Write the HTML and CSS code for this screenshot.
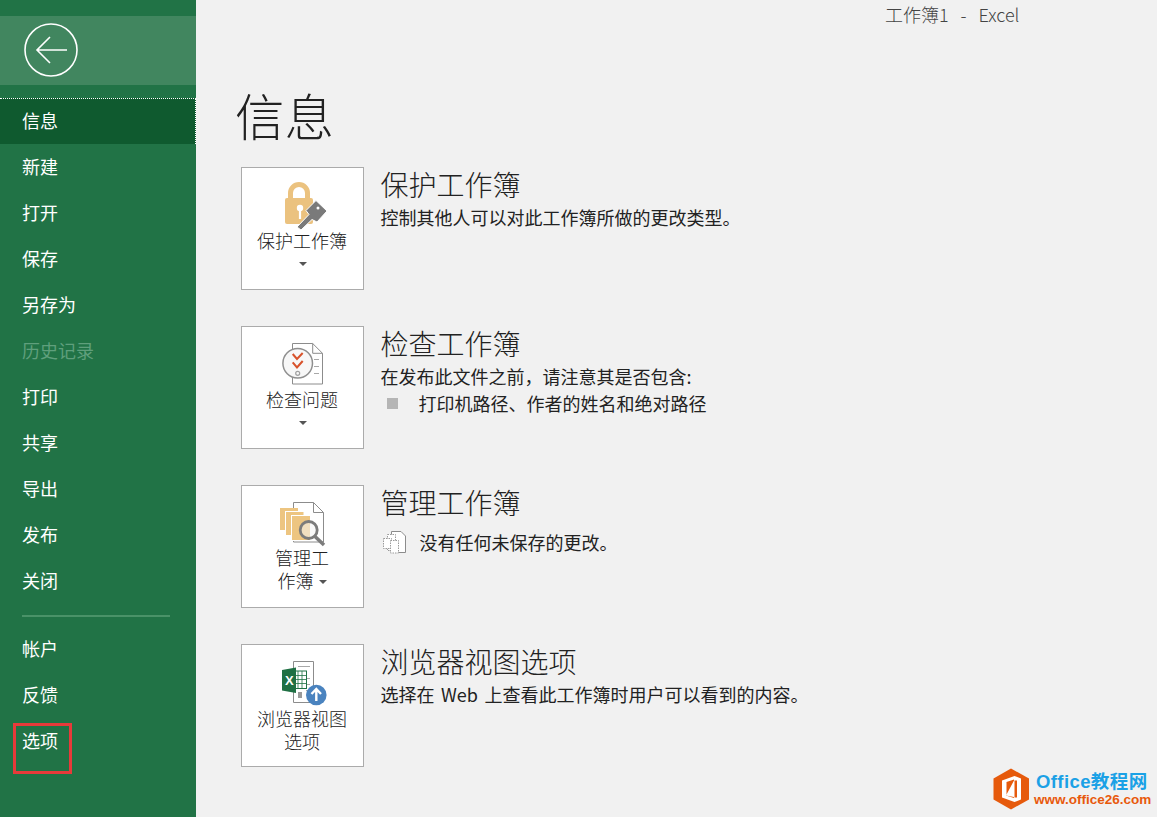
FILE: index.html
```html
<!DOCTYPE html>
<html lang="zh-CN">
<head>
<meta charset="utf-8">
<title>信息</title>
<link rel="stylesheet" href="styles.css">
</head>
<body>
<div class="app">
  <aside class="sidebar">
    <div class="back">
      <svg class="back-icon" width="56" height="56" viewBox="0 0 56 56">
        <circle cx="28" cy="28" r="26" fill="none" stroke="#fff" stroke-width="1.6"/>
        <path d="M44 28H14M27 15L14 28L27 41" fill="none" stroke="#fff" stroke-width="1.6"/>
      </svg>
    </div>
    <nav class="nav">
      <div class="nav-item active">信息</div>
      <div class="nav-item">新建</div>
      <div class="nav-item">打开</div>
      <div class="nav-item">保存</div>
      <div class="nav-item">另存为</div>
      <div class="nav-item disabled">历史记录</div>
      <div class="nav-item">打印</div>
      <div class="nav-item">共享</div>
      <div class="nav-item">导出</div>
      <div class="nav-item">发布</div>
      <div class="nav-item">关闭</div>
      <div class="nav-divider"></div>
      <div class="nav-item">帐户</div>
      <div class="nav-item">反馈</div>
      <div class="nav-item">选项</div>
    </nav>
    <div class="highlight"></div>
  </aside>
  <main class="main">
    <div class="titlebar">工作簿1&nbsp;&nbsp; - &nbsp;&nbsp;Excel</div>
    <h1 class="page-title">信息</h1>

    <section class="section">
      <button class="tile">
        <svg class="tile-icon" width="60" height="50" viewBox="0 0 60 50">
          <path d="M17.500 18V12a8.500 8.500 0 0 1 17 0v6" fill="none" stroke="#ebc27f" stroke-width="5"/>
          <rect x="12" y="17" width="28" height="26" rx="2" fill="#ebc27f"/>
          <circle cx="27" cy="27" r="3.2" fill="#fff"/>
          <rect x="25.900" y="28" width="2.2" height="10" fill="#fff"/>
          <path d="M43 19.500L54 30L44 41L39 38.500L28 49L24 46L36 33.500L33 29.500Z" fill="#7a7a7a" stroke="#fff" stroke-width="1"/>
          <circle cx="45" cy="27" r="1.500" fill="#fff"/>
        </svg>
        <span class="tile-label">保护工作簿</span>
        <span class="caret caret-block"></span>
      </button>
      <div class="info">
        <h2>保护工作簿</h2>
        <p>控制其他人可以对此工作簿所做的更改类型。</p>
      </div>
    </section>

    <section class="section">
      <button class="tile">
        <svg class="tile-icon" width="60" height="50" viewBox="0 0 60 50">
          <path d="M19.500 3.500H39.700L49.500 13.300V44H19.500Z" fill="#fff" stroke="#8c8c8c" stroke-width="1"/>
          <path d="M39.700 3.500V13.300H49.500" fill="none" stroke="#8c8c8c" stroke-width="1"/>
          <path d="M41 19.500h5M41 26.500h5M41 33.500h5" stroke="#a8a8a8" stroke-width="1"/>
          <circle cx="24.700" cy="23.300" r="14.800" fill="#f7f7f7" stroke="#8f8f8f" stroke-width="1.500"/>
          <path d="M19.700 14L24 19L29.700 13M19.700 22.300L24 27.500L29.700 21" fill="none" stroke="#d8522b" stroke-width="2"/>
          <circle cx="24.700" cy="33.300" r="2" fill="none" stroke="#a0a0a0" stroke-width="1.200"/>
        </svg>
        <span class="tile-label">检查问题</span>
        <span class="caret caret-block"></span>
      </button>
      <div class="info">
        <h2>检查工作簿</h2>
        <p>在发布此文件之前，请注意其是否包含:</p>
        <p class="bullet-row"><span class="bullet"></span>打印机路径、作者的姓名和绝对路径</p>
      </div>
    </section>

    <section class="section">
      <button class="tile">
        <svg class="tile-icon" width="60" height="50" viewBox="0 0 60 50">
          <path d="M20.500 3.500H40.500L50.500 13.500V43H20.500Z" fill="#fff" stroke="#8c8c8c" stroke-width="1"/>
          <path d="M40.500 3.500V13.500H50.500" fill="none" stroke="#8c8c8c" stroke-width="1"/>
          <rect x="7" y="9" width="18" height="22" fill="#edc581"/>
          <rect x="12.500" y="12.500" width="18.500" height="24" fill="#edc581" stroke="#fff"/>
          <rect x="18.500" y="16.500" width="19" height="25" fill="#edc581" stroke="#fff"/>
          <circle cx="35.700" cy="31" r="8.500" fill="#f4f4f4" fill-opacity=".55" stroke="#7c7c7c" stroke-width="2.800"/>
          <path d="M42 37.500L51 46" stroke="#7c7c7c" stroke-width="3.500"/>
        </svg>
        <span class="tile-label tile-label-wrap tile-label-high">管理工<br>作簿<span class="caret caret-inline"></span></span>
      </button>
      <div class="info">
        <h2>管理工作簿</h2>
        <p class="note-row">
          <svg class="note-icon" width="24" height="24" viewBox="0 0 24 24">
            <path d="M9.500 1.500H19L23.500 6V22.500H9.500Z" fill="#fff" stroke="#8c8c8c"/>
            <path d="M5.500 4.500H13.500V20.500H5.500Z" fill="#fff" stroke="#9a9a9a" stroke-dasharray="1.500 1"/>
            <path d="M1.500 8.500H9.500V18.500H1.500Z" fill="#fff" stroke="#9a9a9a" stroke-dasharray="1.500 1"/>
            <path d="M8.500 10.500H16.500V23H8.500Z" fill="#fff" stroke="#9a9a9a" stroke-dasharray="1.500 1"/>
          </svg>
          没有任何未保存的更改。
        </p>
      </div>
    </section>

    <section class="section">
      <button class="tile">
        <svg class="tile-icon" width="60" height="50" viewBox="0 0 60 50">
          <path d="M20.500 3.500H40.500V44.500H20.500Z" fill="#fff" stroke="#8c8c8c"/>
          <path d="M25 8.500H37M33 20.500H37M33 26.500H37M33 32.500H37" stroke="#a8a8a8"/>
          <rect x="25" y="34" width="4" height="6" fill="#9a9a9a"/>
          <rect x="21" y="13" width="12.500" height="17.500" fill="#fff" stroke="#217346"/>
          <path d="M21 17.500H33.500M21 21.500H33.500M21 25.500H33.500M25 13V30M29 13V30" stroke="#217346" stroke-width=".8"/>
          <path d="M9 12L23 9.500V35L9 32.500Z" fill="#1f7044"/>
          <text class="xl" x="12" y="27">X</text>
          <circle cx="43.300" cy="37" r="10.300" fill="#4a83bf"/>
          <path d="M43.300 43V31.500M38.500 36L43.300 31L48 36" fill="none" stroke="#fff" stroke-width="2.400"/>
        </svg>
        <span class="tile-label tile-label-wrap">浏览器视图<br>选项</span>
      </button>
      <div class="info">
        <h2>浏览器视图选项</h2>
        <p class="wide-words">选择在 Web 上查看此工作簿时用户可以看到的内容。</p>
      </div>
    </section>
  </main>
</div>
<div class="watermark">
  <svg width="38" height="42" viewBox="0 0 38 42">
    <path d="M18 0.500L36 10.500V31.500L18 41.500L0.500 31.500V10.500Z" fill="#e65a0c"/>
    <path d="M21.500 8L9 12.500V29.500L21.500 34L28 31.500V10.500Z" fill="#fff"/>
    <path d="M21 12.500V29L13 27.500L21 30V11.500L13.500 14V27.500L13 27.500Z" fill="#e65a0c"/>
    <rect x="21.500" y="12.500" width="2.500" height="17" fill="#e65a0c"/>
  </svg>
  <div class="wm-text">
    <div class="wm-top">Office教程网</div>
    <div class="wm-bottom">www.office26.com</div>
  </div>
</div>
</body>
</html>
```
FILE: styles.css
```css
* { box-sizing: border-box; }
html, body { margin: 0; padding: 0; height: 817px; overflow: hidden; }
body {
  position: relative;
  background: #f1f1f1;
  color: #333;
  font-family: "Noto Sans CJK SC", "Liberation Sans", sans-serif;
}
.app { display: flex; height: 817px; }

.sidebar {
  position: relative;
  flex: 0 0 196px;
  background: #217346;
  padding-top: 16px;
  color: #fff;
}
.back {
  height: 69px;
  background: #41865f;
  margin-bottom: 13px;
  display: flex;
  align-items: center;
  padding: 0 0 2px 23px;
}
.nav-item {
  height: 46px;
  display: flex;
  align-items: center;
  padding: 0 0 3px 22px;
  font-size: 18px;
  font-weight: 400;
  line-height: 1;
}
.nav-item.active {
  background: #0f5a2f;
  border-top: 1px dotted #fff;
  border-right: 1px dotted #fff;
}
.nav-item.disabled { color: #5f9f7c; }
.nav-divider {
  height: 2px;
  margin: 11px 26px 9px 22px;
  background: #4a9268;
}
.highlight {
  position: absolute;
  left: 13px;
  top: 723px;
  width: 59px;
  height: 51px;
  border: 3px solid #e83a3a;
}

.main { flex: 1; padding-left: 45px; }
.titlebar {
  height: 30px;
  padding-left: 644px;
  font-size: 18px;
  font-weight: 300;
  line-height: 29px;
  color: #444;
  white-space: nowrap;
}
.page-title {
  margin: 55px 0 22px -6px;
  font-size: 49.500px;
  font-weight: 300;
  line-height: 60px;
  color: #222;
}
.section { display: flex; gap: 16.500px; height: 123px; margin-bottom: 36px; }
.tile {
  flex: 0 0 123px;
  height: 123px;
  display: flex;
  flex-direction: column;
  align-items: center;
  padding: 13px 0 0;
  border: 1px solid #ababab;
  background: #fff;
  color: #222;
  font-family: inherit;
}
.tile-icon { display: block; flex: none; }
.tile-label {
  font-size: 18px;
  font-weight: 300;
  line-height: 23px;
  margin-top: -2px;
  padding-right: 1px;
  text-align: center;
  white-space: nowrap;
}
.tile-label-wrap { margin-top: -1.500px; }
.tile-label-high { margin-top: -3px; }
.caret {
  width: 0;
  height: 0;
  border-left: 4px solid transparent;
  border-right: 4px solid transparent;
  border-top: 4px solid #555;
}
.caret-block { margin-top: 10px; display: block; }
.caret-inline { display: inline-block; margin-left: 5px; vertical-align: 4px; }

.info h2 {
  margin: 0;
  font-size: 28px;
  font-weight: 300;
  line-height: 35px;
  color: #222;
}
.info p {
  margin: 2px 0 0;
  font-size: 18px;
  font-weight: 400;
  line-height: 26px;
  color: #222;
  white-space: nowrap;
}
.info .bullet-row { margin-top: 1px; display: flex; align-items: center; }
.bullet {
  flex: none;
  width: 11px;
  height: 11px;
  background: #b5b5b5;
  margin: 0 21px 0 6px;
}
.info .note-row { margin-top: 9px; display: flex; align-items: center; gap: 14px; }
.info .wide-words { word-spacing: 2.500px; }
.note-icon { flex: none; margin-left: 1px; }
.xl { font-family: "Liberation Sans", sans-serif; font-size: 13px; font-weight: 700; fill: #fff; }

.watermark {
  position: absolute;
  left: 993px;
  top: 768px;
  display: flex;
  align-items: center;
  gap: 3px;
}
.watermark svg { display: block; }
.wm-text { font-family: "Liberation Sans", "Noto Sans CJK SC", sans-serif; font-weight: 700; white-space: nowrap; }
.wm-top { font-size: 18.500px; line-height: 22px; color: #1ba1e6; padding-left: 2px; letter-spacing: .4px; }
.wm-bottom { font-size: 13.500px; line-height: 14px; color: #e8590c; }
```
